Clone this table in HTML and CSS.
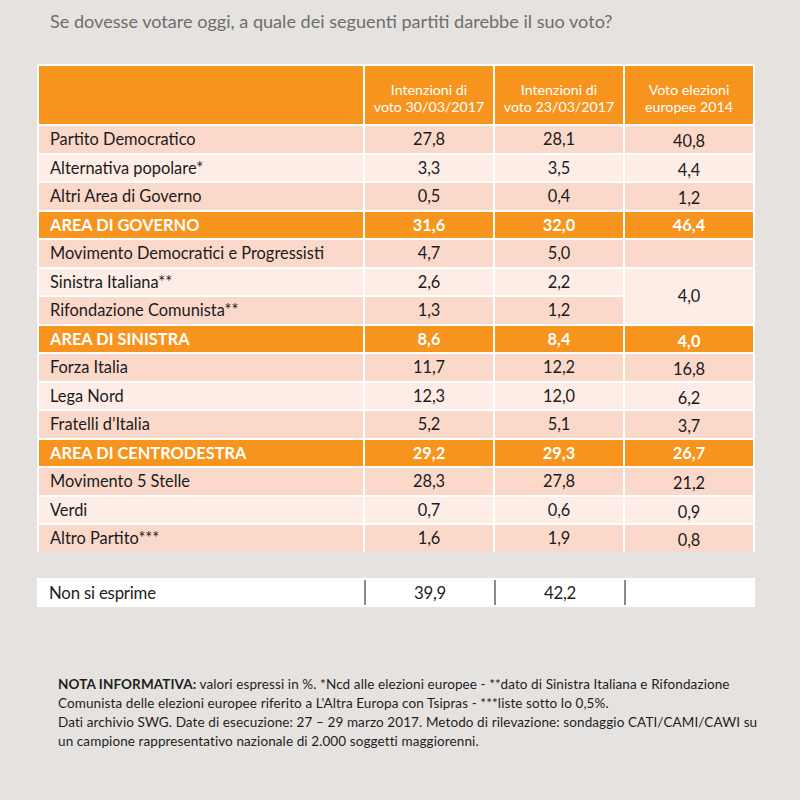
FILE: index.html
```html
<!DOCTYPE html>
<html lang="it">
<head>
<meta charset="utf-8">
<title>Sondaggio</title>
<link rel="stylesheet" href="styles.css">
</head>
<body>
<div class="page">
  <h1 class="title">Se dovesse votare oggi, a quale dei seguenti partiti darebbe il suo voto?</h1>

  <div class="grid">
    <div class="head"></div>
    <div class="head">Intenzioni di<br>voto 30/03/2017</div>
    <div class="head">Intenzioni di<br>voto 23/03/2017</div>
    <div class="head">Voto elezioni<br>europee 2014</div>

    <div class="c dark lab">Partito Democratico</div><div class="c dark">27,8</div><div class="c dark">28,1</div><div class="c dark eu">40,8</div>
    <div class="c light lab">Alternativa popolare*</div><div class="c light">3,3</div><div class="c light">3,5</div><div class="c light eu">4,4</div>
    <div class="c dark lab">Altri Area di Governo</div><div class="c dark">0,5</div><div class="c dark">0,4</div><div class="c dark eu">1,2</div>
    <div class="c area lab">AREA DI GOVERNO</div><div class="c area">31,6</div><div class="c area">32,0</div><div class="c area">46,4</div>

    <div class="c dark lab">Movimento Democratici e Progressisti</div><div class="c dark">4,7</div><div class="c dark">5,0</div><div class="c dark eu"></div>
    <div class="c light lab">Sinistra Italiana**</div><div class="c light">2,6</div><div class="c light">2,2</div><div class="c light eu span2">4,0</div>
    <div class="c dark lab">Rifondazione Comunista**</div><div class="c dark">1,3</div><div class="c dark">1,2</div>
    <div class="c area lab">AREA DI SINISTRA</div><div class="c area">8,6</div><div class="c area">8,4</div><div class="c area eu">4,0</div>

    <div class="c dark lab">Forza Italia</div><div class="c dark">11,7</div><div class="c dark">12,2</div><div class="c dark eu">16,8</div>
    <div class="c light lab">Lega Nord</div><div class="c light">12,3</div><div class="c light">12,0</div><div class="c light eu">6,2</div>
    <div class="c dark lab">Fratelli d’Italia</div><div class="c dark">5,2</div><div class="c dark">5,1</div><div class="c dark eu">3,7</div>
    <div class="c area lab">AREA DI CENTRODESTRA</div><div class="c area">29,2</div><div class="c area">29,3</div><div class="c area">26,7</div>

    <div class="c dark lab">Movimento 5 Stelle</div><div class="c dark">28,3</div><div class="c dark">27,8</div><div class="c dark eu">21,2</div>
    <div class="c light lab">Verdi</div><div class="c light">0,7</div><div class="c light">0,6</div><div class="c light eu">0,9</div>
    <div class="c dark lab">Altro Partito***</div><div class="c dark">1,6</div><div class="c dark">1,9</div><div class="c dark eu">0,8</div>
  </div>

  <div class="nse">
    <div class="n lab">Non si esprime</div>
    <div class="n sep">39,9</div>
    <div class="n sep">42,2</div>
    <div class="n sep"></div>
  </div>

  <div class="note">
    <p><b>NOTA INFORMATIVA:</b> valori espressi in %. *Ncd alle elezioni europee - **dato di Sinistra Italiana e Rifondazione<br>Comunista delle elezioni europee riferito a L'Altra Europa con Tsipras - ***liste sotto lo 0,5%.</p>
    <p>Dati archivio SWG. Date di esecuzione: 27 – 29 marzo 2017. Metodo di rilevazione: sondaggio CATI/CAMI/CAWI su<br>un campione rappresentativo nazionale di 2.000 soggetti maggiorenni.</p>
  </div>
</div>
</body>
</html>
```

FILE: styles.css
```css
html, body {
  margin: 0;
  padding: 0;
  background: #e6e2df;
}

.page {
  width: 800px;
  height: 800px;
  box-sizing: border-box;
  padding-top: 10px;
  font-family: Lato, "Open Sans", sans-serif;
  color: #1b1b1b;
}

.title {
  margin: 0 0 0 50px;
  font-size: 18.1px;
  line-height: 22px;
  font-weight: normal;
  color: #6e6e6e;
}

.grid {
  margin: 32px 0 0 37px;
  width: 718px;
  box-sizing: border-box;
  display: grid;
  grid-template-columns: 324px 128px 128px 128px;
  grid-template-rows: 58px repeat(15, 26.5px);
  gap: 2px;
  padding: 2px 2px 0 2px;
  background: #ffffff;
}

.head {
  background: #f7941d;
  color: #ffffff;
  font-size: 14.2px;
  line-height: 17.5px;
  text-align: center;
  display: flex;
  align-items: center;
  justify-content: center;
  padding-top: 6px;
}

.c {
  display: flex;
  align-items: center;
  justify-content: center;
  font-size: 16.4px;
  line-height: 20px;
}

.c.lab {
  justify-content: flex-start;
  padding-left: 11px;
}

.eu {
  padding-top: 4px;
  box-sizing: border-box;
}

.span2 {
  grid-row: span 2;
  padding-top: 0;
}

.dark { background: #fbd9ca; }
.light { background: #fdede6; }

.area {
  background: #f7941d;
  color: #ffffff;
  font-weight: bold;
}

.nse {
  margin: 26px 0 0 37px;
  width: 718px;
  height: 29px;
  box-sizing: border-box;
  display: grid;
  grid-template-columns: 325px 130px 130px 129px;
  padding: 0 2px;
  background: #ffffff;
}

.n {
  display: flex;
  align-items: center;
  justify-content: center;
  font-size: 16.8px;
  color: #222;
  letter-spacing: -0.2px;
}

.n.lab {
  justify-content: flex-start;
  padding-left: 10px;
}

.n.sep {
  border-left: 2px solid #8a8a8a;
  margin: 2px 0;
}

.note {
  margin: 68px 0 0 58px;
  font-size: 13.5px;
  line-height: 19px;
  color: #1e1e1e;
  letter-spacing: 0.1px;
}

.note p {
  margin: 0;
}

.note b {
  font-weight: bold;
}
```
